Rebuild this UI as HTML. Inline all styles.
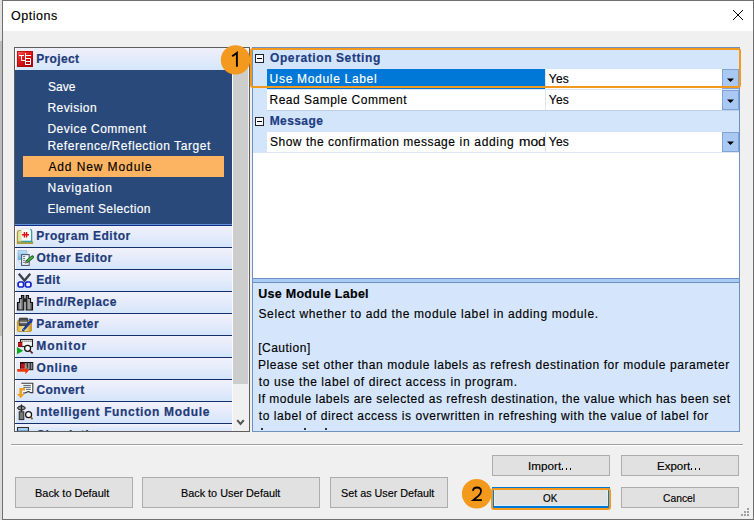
<!DOCTYPE html>
<html><head><meta charset="utf-8"><style>
html,body{margin:0;padding:0;width:754px;height:520px;overflow:hidden;background:#dadada;}
body{position:relative;font-family:"Liberation Sans",sans-serif;}
.t{position:absolute;white-space:pre;line-height:20px;-webkit-text-stroke:0.15px currentColor;}
.b{position:absolute;box-sizing:border-box;}
svg{position:absolute;}
</style></head><body>
<div class="b" style="left:0px;top:0px;width:2px;height:41px;background:#e2e2e2;"></div>
<div class="b" style="left:0px;top:41px;width:2px;height:295px;background:#bcbcbc;"></div>
<div class="b" style="left:0px;top:336px;width:2px;height:184px;background:#dcdcdc;"></div>
<div class="b" style="left:2px;top:0px;width:752px;height:520px;border:1px solid #707070;background:#f0f0f0;"></div>
<div class="b" style="left:3px;top:1px;width:750px;height:30px;background:#fff;"></div>
<div class="t" style="left:10.90px;top:6px;font-size:12.5px;color:#000;letter-spacing:0.533px;">Options</div>
<svg style="left:0;top:0" width="754" height="40" viewBox="0 0 754 40" fill="#000" shape-rendering="crispEdges"><rect x="733" y="10" width="1" height="1"/><rect x="742" y="10" width="1" height="1"/><rect x="734" y="11" width="1" height="1"/><rect x="741" y="11" width="1" height="1"/><rect x="735" y="12" width="1" height="1"/><rect x="740" y="12" width="1" height="1"/><rect x="736" y="13" width="1" height="1"/><rect x="739" y="13" width="1" height="1"/><rect x="737" y="14" width="1" height="1"/><rect x="738" y="14" width="1" height="1"/><rect x="738" y="15" width="1" height="1"/><rect x="737" y="15" width="1" height="1"/><rect x="739" y="16" width="1" height="1"/><rect x="736" y="16" width="1" height="1"/><rect x="740" y="17" width="1" height="1"/><rect x="735" y="17" width="1" height="1"/><rect x="741" y="18" width="1" height="1"/><rect x="734" y="18" width="1" height="1"/><rect x="742" y="19" width="1" height="1"/><rect x="733" y="19" width="1" height="1"/></svg>
<div class="b" style="left:14px;top:47px;width:236px;height:385px;border:1px solid #5e5e5e;background:#fff;"></div>
<div class="b" style="left:0;top:0;width:754px;height:520px;clip-path:inset(48px 505px 89px 15px);">
<div class="b" style="left:15px;top:48px;width:217px;height:22px;background:linear-gradient(#efeff9,#d5e7fc);border-left:1px solid #fff;"></div>
<div class="b" style="left:15px;top:70px;width:217px;height:154px;background:#29497a;"></div>
<div class="b" style="left:15px;top:224px;width:217px;height:1px;background:#6590dc;"></div>
<div class="b" style="left:15px;top:225px;width:217px;height:1px;background:#0e2e7e;"></div>
<div class="b" style="left:23px;top:156px;width:201px;height:21px;background:#fcb462;"></div>
<div class="t" style="left:47.90px;top:77px;font-size:12px;color:#fff;letter-spacing:0.033px;">Save</div>
<div class="t" style="left:47.40px;top:98px;font-size:12px;color:#fff;letter-spacing:0.457px;">Revision</div>
<div class="t" style="left:47.40px;top:119px;font-size:12px;color:#fff;letter-spacing:0.508px;">Device Comment</div>
<div class="t" style="left:47.40px;top:136px;font-size:12px;color:#fff;letter-spacing:0.550px;">Reference/Reflection Target</div>
<div class="t" style="left:48.40px;top:157px;font-size:12px;color:#000;letter-spacing:0.900px;">Add New Module</div>
<div class="t" style="left:47.40px;top:178px;font-size:12px;color:#fff;letter-spacing:0.867px;">Navigation</div>
<div class="t" style="left:47.40px;top:199px;font-size:12px;color:#fff;letter-spacing:0.400px;">Element Selection</div>
<div class="t" style="left:36.20px;top:49px;font-size:12px;color:#1f3b79;font-weight:bold;letter-spacing:0.367px;-webkit-text-stroke:0.2px #1f3b79;">Project</div>
<div class="b" style="left:15px;top:226px;width:217px;height:21px;background:linear-gradient(#f2f1fa,#d5e5fb);border-left:1px solid #fff;"></div>
<div class="b" style="left:15px;top:247px;width:217px;height:1px;background:#132f6a;"></div>
<div class="t" style="left:36.20px;top:226px;font-size:12px;color:#1f3b79;font-weight:bold;letter-spacing:0.508px;-webkit-text-stroke:0.2px #1f3b79;">Program Editor</div>
<div class="b" style="left:15px;top:248px;width:217px;height:21px;background:linear-gradient(#f2f1fa,#d5e5fb);border-left:1px solid #fff;"></div>
<div class="b" style="left:15px;top:269px;width:217px;height:1px;background:#132f6a;"></div>
<div class="t" style="left:36.50px;top:248px;font-size:12px;color:#1f3b79;font-weight:bold;letter-spacing:0.518px;-webkit-text-stroke:0.2px #1f3b79;">Other Editor</div>
<div class="b" style="left:15px;top:270px;width:217px;height:21px;background:linear-gradient(#f2f1fa,#d5e5fb);border-left:1px solid #fff;"></div>
<div class="b" style="left:15px;top:291px;width:217px;height:1px;background:#132f6a;"></div>
<div class="t" style="left:36.20px;top:270px;font-size:12px;color:#1f3b79;font-weight:bold;letter-spacing:0.400px;-webkit-text-stroke:0.2px #1f3b79;">Edit</div>
<div class="b" style="left:15px;top:292px;width:217px;height:21px;background:linear-gradient(#f2f1fa,#d5e5fb);border-left:1px solid #fff;"></div>
<div class="b" style="left:15px;top:313px;width:217px;height:1px;background:#132f6a;"></div>
<div class="t" style="left:36.20px;top:292px;font-size:12px;color:#1f3b79;font-weight:bold;letter-spacing:0.500px;-webkit-text-stroke:0.2px #1f3b79;">Find/Replace</div>
<div class="b" style="left:15px;top:314px;width:217px;height:21px;background:linear-gradient(#f2f1fa,#d5e5fb);border-left:1px solid #fff;"></div>
<div class="b" style="left:15px;top:335px;width:217px;height:1px;background:#132f6a;"></div>
<div class="t" style="left:36.20px;top:314px;font-size:12px;color:#1f3b79;font-weight:bold;letter-spacing:0.475px;-webkit-text-stroke:0.2px #1f3b79;">Parameter</div>
<div class="b" style="left:15px;top:336px;width:217px;height:21px;background:linear-gradient(#f2f1fa,#d5e5fb);border-left:1px solid #fff;"></div>
<div class="b" style="left:15px;top:357px;width:217px;height:1px;background:#132f6a;"></div>
<div class="t" style="left:36.20px;top:336px;font-size:12px;color:#1f3b79;font-weight:bold;letter-spacing:1.000px;-webkit-text-stroke:0.2px #1f3b79;">Monitor</div>
<div class="b" style="left:15px;top:358px;width:217px;height:21px;background:linear-gradient(#f2f1fa,#d5e5fb);border-left:1px solid #fff;"></div>
<div class="b" style="left:15px;top:379px;width:217px;height:1px;background:#132f6a;"></div>
<div class="t" style="left:36.50px;top:358px;font-size:12px;color:#1f3b79;font-weight:bold;letter-spacing:0.700px;-webkit-text-stroke:0.2px #1f3b79;">Online</div>
<div class="b" style="left:15px;top:380px;width:217px;height:21px;background:linear-gradient(#f2f1fa,#d5e5fb);border-left:1px solid #fff;"></div>
<div class="b" style="left:15px;top:401px;width:217px;height:1px;background:#132f6a;"></div>
<div class="t" style="left:36.50px;top:380px;font-size:12px;color:#1f3b79;font-weight:bold;letter-spacing:0.383px;-webkit-text-stroke:0.2px #1f3b79;">Convert</div>
<div class="b" style="left:15px;top:402px;width:217px;height:21px;background:linear-gradient(#f2f1fa,#d5e5fb);border-left:1px solid #fff;"></div>
<div class="b" style="left:15px;top:423px;width:217px;height:1px;background:#132f6a;"></div>
<div class="t" style="left:36.20px;top:402px;font-size:12px;color:#1f3b79;font-weight:bold;letter-spacing:0.662px;-webkit-text-stroke:0.2px #1f3b79;">Intelligent Function Module</div>
<div class="b" style="left:15px;top:424px;width:217px;height:7px;background:linear-gradient(#f2f1fa,#d5e5fb);border-left:1px solid #fff;"></div>
<div class="t" style="left:36.70px;top:425px;font-size:12px;color:#1f3b79;font-weight:bold;letter-spacing:0.744px;-webkit-text-stroke:0.2px #1f3b79;">Simulation</div>
<svg style="left:0;top:0" width="754" height="520" viewBox="0 0 754 520">
<defs>
<linearGradient id="gRed" x1="0" y1="0" x2="0.8" y2="1"><stop offset="0" stop-color="#ff7070"/><stop offset="0.35" stop-color="#ee2020"/><stop offset="1" stop-color="#a00000"/></linearGradient>
<linearGradient id="gGray" x1="0" y1="0" x2="1" y2="0"><stop offset="0" stop-color="#404040"/><stop offset="0.45" stop-color="#b0b0b0"/><stop offset="1" stop-color="#383838"/></linearGradient>
<linearGradient id="gGold" x1="0" y1="0" x2="1" y2="0"><stop offset="0" stop-color="#e8b030"/><stop offset="0.5" stop-color="#fff4b0"/><stop offset="1" stop-color="#d09010"/></linearGradient>
<linearGradient id="gBlue" x1="0" y1="0" x2="0" y2="1"><stop offset="0" stop-color="#c0e4fa"/><stop offset="1" stop-color="#4898e0"/></linearGradient>
<linearGradient id="gDrawer" x1="0" y1="0" x2="0" y2="1"><stop offset="0" stop-color="#303030"/><stop offset="0.5" stop-color="#808080"/><stop offset="1" stop-color="#404040"/></linearGradient>
<linearGradient id="gRedCell" x1="0" y1="0" x2="0" y2="1"><stop offset="0" stop-color="#400000"/><stop offset="0.3" stop-color="#d01818"/><stop offset="1" stop-color="#901010"/></linearGradient>
</defs>
<!-- Project icon -->
<rect x="17" y="51" width="16" height="16" fill="url(#gRed)"/>
<rect x="17.5" y="51.5" width="15" height="15" fill="none" stroke="#b00808" stroke-width="1" opacity="0.8"/>
<path d="M19 55.5H24M21.5 55.5V60.5H25.5M25.5 53V65M25.5 55.5H31M25.5 58.5H30.5V64.5H25.5M25.5 61.5H30.5" stroke="#fff" stroke-width="1" fill="none"/>
<!-- Program Editor -->
<path d="M21 230.5H19.5Q17.5 230.5 17.5 232.5V243.5H32.5V241.5" stroke="#a89838" stroke-width="1.2" fill="#e8e498"/>
<rect x="17.6" y="241.2" width="14.8" height="2.4" fill="#b0a040"/>
<path d="M21.3 228.8H30Q31.7 228.8 31.7 230.5V241.2H21.3Z" fill="#fcfefe" stroke="#d0d8d8" stroke-width="0.6"/>
<path d="M30.2 229.3Q31.6 229.6 31.6 231V241.5H21.3" stroke="#38a0a0" stroke-width="1.3" fill="none"/>
<path d="M24.4 232V237.6M26.6 232V237.6M22 234.8H29" stroke="#e01010" stroke-width="1.4" fill="none"/>
<!-- Other Editor -->
<path d="M18 250.5H26.8V263.5H21L18 260Z" fill="url(#gBlue)" stroke="#90a8c8" stroke-width="0.6"/>
<path d="M18 260L21 263.5V260Z" fill="#f0f4f8"/>
<rect x="21.6" y="254.6" width="7.6" height="10.8" fill="#f8f8f8" stroke="#4a5a74" stroke-width="1.1"/>
<path d="M23 256.5H25.2M23 258.5H25.2M23 260.4H25.2M23 262.4H25.2" stroke="#607080" stroke-width="0.9"/>
<path d="M27 261.5L32.4 257" stroke="#1a5a1a" stroke-width="3.2" stroke-linecap="round"/>
<path d="M27.2 261.3L32.2 257.2" stroke="#48b848" stroke-width="1.6" stroke-linecap="round"/>
<path d="M27 260.5L25.2 263.3L28 262.3Z" fill="#e8d0a0" stroke="#303030" stroke-width="0.5"/>
<!-- Edit scissors -->
<path d="M18.8 273.8L24.5 280.6L30.2 273.8" stroke="#3c4048" stroke-width="2.3" fill="none"/>
<path d="M19.4 282H22.5L23.6 283.2V286L22.6 287H19.2L18.1 285.9V283.2Z" fill="#f4f6ff" stroke="#1420c8" stroke-width="1.7"/>
<path d="M29.6 282H26.5L25.4 283.2V286L26.4 287H29.8L30.9 285.9V283.2Z" fill="#f4f6ff" stroke="#1420c8" stroke-width="1.7"/>
<!-- Find/Replace binoculars -->
<path d="M21.5 295.5H23.8V310H17.5V302.5H19.5V298.5H21.5Z" fill="url(#gGray)" stroke="#101010" stroke-width="1.1"/>
<path d="M28.5 295.5H26.2V310H32.5V302.5H30.5V298.5H28.5Z" fill="url(#gGray)" stroke="#101010" stroke-width="1.1"/>
<rect x="23.5" y="298.3" width="3" height="3.6" fill="#202020"/>
<!-- Parameter -->
<rect x="17.4" y="320.5" width="14" height="11" rx="1.2" fill="url(#gGold)" stroke="#b88820" stroke-width="0.8"/>
<rect x="19.2" y="318.2" width="8.6" height="7.4" rx="0.6" fill="url(#gDrawer)" stroke="#282828" stroke-width="0.8"/>
<path d="M19.8 322.5H27.2" stroke="#e0e0e0" stroke-width="0.7"/>
<path d="M23.3 330L30.6 321.3" stroke="#1a3c9c" stroke-width="2.6" stroke-linecap="round"/>
<path d="M29.2 319.2L32 319.8L31.2 322.6" stroke="#1a3c9c" stroke-width="1.6" fill="none"/>
<circle cx="23.8" cy="329.4" r="0.5" fill="#80c0ff"/>
<!-- Monitor -->
<rect x="20.5" y="339.5" width="12" height="7" fill="#f4f4f4" stroke="#202020" stroke-width="1.1"/>
<path d="M21.5 341.2H32" stroke="#404040" stroke-width="1" stroke-dasharray="1.2 0.8"/>
<rect x="18" y="342" width="4.4" height="5" fill="url(#gRedCell)"/>
<path d="M17 347L23.2 350.8L17 354.3Z" fill="#10a818"/>
<circle cx="27.6" cy="348.3" r="3" fill="#fafafa" stroke="#101010" stroke-width="1.2"/>
<path d="M29.9 350.7L32.6 353.3" stroke="#602028" stroke-width="1.7"/>
<!-- Online -->
<rect x="20.5" y="362.5" width="12.3" height="7.2" fill="#8c8c8c" stroke="#151515" stroke-width="1"/>
<rect x="20.8" y="362.8" width="4" height="6.5" fill="url(#gRedCell)"/>
<path d="M27.3 363V369.4M30.3 363V369.4" stroke="#2c2c2c" stroke-width="1.1"/>
<path d="M17.2 369.1H25.3V366.6L28.9 370.4L25.3 374.2V371.8H17.2Z" fill="#e83a10" stroke="#fff" stroke-width="0.8" stroke-opacity="0.7" paint-order="stroke"/>
<!-- Convert -->
<path d="M21.3 383.3H32.8V392.6H30.4Q28.6 390.9 26.6 392.2Q25 393.2 23.2 392.9" fill="#fff" stroke="#383838" stroke-width="1.1"/>
<path d="M23.3 385.4H30.8M23.3 387.3H30.8M26 389.3H30.8" stroke="#3c4c5c" stroke-width="0.9"/>
<path d="M25 389.3H20.7V394.6" stroke="#f0a020" stroke-width="2.6" fill="none"/>
<path d="M16.9 394.1H24.5L20.7 398.2Z" fill="#f0a020"/>
<!-- Intelligent Function Module -->
<path d="M17.2 408Q21.4 403.6 25.6 408Q21.4 412.4 17.2 408Z" fill="#f4f4f4" stroke="#101010" stroke-width="1"/>
<path d="M18.2 407H24.6M18.2 409H24.6M21.4 404.3V412" stroke="#101010" stroke-width="0.9"/>
<rect x="19.2" y="411.8" width="4.6" height="7.8" fill="#787878" stroke="#2a2a2a" stroke-width="1"/>
<circle cx="28.6" cy="414.7" r="3" fill="#fafafa" stroke="#101010" stroke-width="1.2"/>
<path d="M30.7 417L32.5 419.3" stroke="#8a5020" stroke-width="1.7"/>
<!-- Simulation (partial) -->
<rect x="17.5" y="427.5" width="11" height="6" fill="#70a8dc" stroke="#303030" stroke-width="1"/>
<rect x="18.5" y="428.5" width="9" height="1" fill="#e8f4ff"/>
</svg>
</div>
<div class="b" style="left:232px;top:48px;width:17px;height:383px;background:#f0f0f0;border-left:1px solid #fafafa;"></div>
<div class="b" style="left:233px;top:65px;width:15px;height:319px;background:#cdcdcd;"></div>
<svg style="left:236px;top:418px" width="10" height="10" viewBox="0 0 10 10"><path d="M1.2 2.2L4.5 6L7.8 2.2" stroke="#555" stroke-width="2" fill="none"/></svg>
<div class="b" style="left:252px;top:47px;width:488px;height:232px;border:1px solid #6e91c3;background:#fff;"></div>
<div class="b" style="left:253px;top:48px;width:14px;height:105px;background:#d3e5fb;"></div>
<div class="b" style="left:253px;top:48px;width:486px;height:21px;background:#d3e5fb;"></div>
<div class="b" style="left:253px;top:110px;width:486px;height:22px;background:#d3e5fb;"></div>
<div class="b" style="left:267px;top:110px;width:472px;height:1px;background:#bcd0ea;"></div>
<div class="b" style="left:267px;top:89px;width:472px;height:1px;background:#dfe5f2;"></div>
<div class="b" style="left:267px;top:152px;width:472px;height:1px;background:#dfe5f2;"></div>
<div class="b" style="left:267px;top:69px;width:278px;height:20px;background:#0078d7;"></div>
<div class="b" style="left:545px;top:69px;width:1px;height:20px;background:#dfe5f2;"></div>
<div class="b" style="left:722px;top:69px;width:17px;height:20px;background:#a9c9f2;border:1px solid #7ea3d6;"></div>
<svg style="left:722px;top:69px" width="17" height="20" viewBox="0 0 17 20"><path d="M5 9.5H12L8.5 13Z" fill="#000"/></svg>
<div class="b" style="left:545px;top:90px;width:1px;height:20px;background:#dfe5f2;"></div>
<div class="b" style="left:722px;top:90px;width:17px;height:20px;background:#a9c9f2;border:1px solid #7ea3d6;"></div>
<svg style="left:722px;top:90px" width="17" height="20" viewBox="0 0 17 20"><path d="M5 9.5H12L8.5 13Z" fill="#000"/></svg>
<div class="b" style="left:545px;top:132px;width:1px;height:20px;background:#dfe5f2;"></div>
<div class="b" style="left:722px;top:132px;width:17px;height:20px;background:#a9c9f2;border:1px solid #7ea3d6;"></div>
<svg style="left:722px;top:132px" width="17" height="20" viewBox="0 0 17 20"><path d="M5 9.5H12L8.5 13Z" fill="#000"/></svg>
<div class="b" style="left:255px;top:54px;width:9px;height:9px;border:1px solid #222;background:#f5f8fd;"></div>
<div class="b" style="left:257px;top:58px;width:5px;height:1px;background:#000;"></div>
<div class="b" style="left:255px;top:117px;width:9px;height:9px;border:1px solid #222;background:#f5f8fd;"></div>
<div class="b" style="left:257px;top:121px;width:5px;height:1px;background:#000;"></div>
<div class="t" style="left:270.00px;top:48px;font-size:12px;color:#1e3c82;font-weight:bold;letter-spacing:0.600px;-webkit-text-stroke:0.2px #1e3c82;">Operation Setting</div>
<div class="t" style="left:269.60px;top:69px;font-size:12px;color:#fff;letter-spacing:0.687px;">Use Module Label</div>
<div class="t" style="left:548.70px;top:69px;font-size:12px;color:#000;letter-spacing:0.300px;">Yes</div>
<div class="t" style="left:269.50px;top:90px;font-size:12px;color:#000;letter-spacing:0.500px;">Read Sample Comment</div>
<div class="t" style="left:548.70px;top:90px;font-size:12px;color:#000;letter-spacing:0.300px;">Yes</div>
<div class="t" style="left:269.70px;top:111px;font-size:12px;color:#1e3c82;font-weight:bold;letter-spacing:0.417px;-webkit-text-stroke:0.2px #1e3c82;">Message</div>
<div class="b" style="left:0;top:0;width:754px;height:520px;clip-path:inset(132px 209px 368px 267px);">
<div class="t" style="left:270.00px;top:132px;font-size:12px;color:#000;letter-spacing:0.507px;">Show the confirmation message</div>
<div class="t" style="left:459.60px;top:132px;font-size:12px;color:#000;letter-spacing:0.675px;">in adding</div>
<div class="t" style="left:518.68px;top:132px;font-size:12px;color:#000;transform:scaleX(1.1468);transform-origin:0 0;">mod</div>
</div>
<div class="t" style="left:548.70px;top:132px;font-size:12px;color:#000;letter-spacing:0.300px;">Yes</div>
<div class="b" style="left:253px;top:279px;width:486px;height:3px;background:#a9cbf4;"></div>
<div class="b" style="left:252px;top:279px;width:1px;height:3px;background:#6e91c3;"></div>
<div class="b" style="left:739px;top:279px;width:1px;height:3px;background:#6e91c3;"></div>
<div class="b" style="left:252px;top:282px;width:488px;height:150px;border:1px solid #6e91c3;background:#d5e6fc;"></div>
<div class="b" style="left:0;top:0;width:754px;height:520px;clip-path:inset(283px 15px 89px 253px);">
<div class="t" style="left:258.30px;top:284px;font-size:12.5px;color:#000;font-weight:bold;letter-spacing:0.267px;">Use Module Label</div>
<div class="t" style="left:258.50px;top:304px;font-size:12px;color:#000;letter-spacing:0.618px;">Select whether to add the module label in adding module.</div>
<div class="t" style="left:258.20px;top:338px;font-size:12px;color:#000;letter-spacing:0.5px;">[Caution]</div>
<div class="t" style="left:258.00px;top:355px;font-size:12px;color:#000;letter-spacing:0.568px;">Please set other than module labels as refresh destination for module parameter</div>
<div class="t" style="left:258.80px;top:372px;font-size:12px;color:#000;letter-spacing:0.593px;">to use the label of direct access in program.</div>
<div class="t" style="left:257.90px;top:389px;font-size:12px;color:#000;letter-spacing:0.493px;">If module labels are selected as refresh destination, the value which has been set</div>
<div class="t" style="left:258.80px;top:406px;font-size:12px;color:#000;letter-spacing:0.549px;">to label of direct access is overwritten in refreshing with the value of label for</div>
<div class="b" style="left:261px;top:428px;width:2px;height:2px;background:#333;"></div>
<div class="b" style="left:304px;top:428px;width:2px;height:2px;background:#333;"></div>
<div class="b" style="left:325px;top:428px;width:2px;height:2px;background:#333;"></div>
</div>
<div class="b" style="left:11px;top:444px;width:732px;height:1px;background:#a0a0a0;"></div>
<div class="b" style="left:11px;top:445px;width:732px;height:1px;background:#fff;"></div>
<div class="b" style="left:15px;top:477px;width:118px;height:31px;border:1px solid #adadad;background:#e1e1e1;"></div>
<div class="t" style="left:35.40px;top:483px;font-size:11px;color:#000;transform:scaleX(0.9946);transform-origin:0 0;">Back to Default</div>
<div class="b" style="left:142px;top:477px;width:178px;height:31px;border:1px solid #adadad;background:#e1e1e1;"></div>
<div class="t" style="left:180.61px;top:483px;font-size:11px;color:#000;transform:scaleX(0.9850);transform-origin:0 0;">Back to User Default</div>
<div class="b" style="left:330px;top:477px;width:118px;height:31px;border:1px solid #adadad;background:#e1e1e1;"></div>
<div class="t" style="left:341.21px;top:483px;font-size:11px;color:#000;transform:scaleX(0.9789);transform-origin:0 0;">Set as User Default</div>
<div class="b" style="left:492px;top:455px;width:118px;height:21px;border:1px solid #adadad;background:#e1e1e1;"></div>
<div class="t" style="left:527.69px;top:456px;font-size:11px;color:#000;transform:scaleX(1.0631);transform-origin:0 0;">Import</div>
<div class="b" style="left:561.7px;top:467.9px;width:1.6px;height:1.8px;background:#000;border-radius:0.3px;"></div>
<div class="b" style="left:565.6px;top:467.9px;width:1.6px;height:1.8px;background:#000;border-radius:0.3px;"></div>
<div class="b" style="left:569.6px;top:467.9px;width:1.6px;height:1.8px;background:#000;border-radius:0.3px;"></div>
<div class="b" style="left:621px;top:455px;width:118px;height:21px;border:1px solid #adadad;background:#e1e1e1;"></div>
<div class="t" style="left:656.56px;top:456px;font-size:11px;color:#000;transform:scaleX(1.0455);transform-origin:0 0;">Export</div>
<div class="b" style="left:690.7px;top:467.9px;width:1.6px;height:1.8px;background:#000;border-radius:0.3px;"></div>
<div class="b" style="left:694.6px;top:467.9px;width:1.6px;height:1.8px;background:#000;border-radius:0.3px;"></div>
<div class="b" style="left:698.6px;top:467.9px;width:1.6px;height:1.8px;background:#000;border-radius:0.3px;"></div>
<div class="b" style="left:492px;top:487px;width:118px;height:21px;border:2px solid #0078d7;background:#e1e1e1;box-shadow:inset 0 0 0 1px #d4f2ff;"></div>
<div class="t" style="left:543.30px;top:488px;font-size:11px;color:#000;transform:scaleX(0.8987);transform-origin:0 0;">OK</div>
<div class="b" style="left:621px;top:487px;width:118px;height:21px;border:1px solid #adadad;background:#e1e1e1;"></div>
<div class="t" style="left:663.28px;top:488px;font-size:11px;color:#000;transform:scaleX(0.9394);transform-origin:0 0;">Cancel</div>
<div class="b" style="left:747px;top:508px;width:2px;height:2px;background:#a0a0a0;"></div>
<div class="b" style="left:744px;top:511px;width:2px;height:2px;background:#a0a0a0;"></div>
<div class="b" style="left:747px;top:511px;width:2px;height:2px;background:#a0a0a0;"></div>
<div class="b" style="left:741px;top:514px;width:2px;height:2px;background:#a0a0a0;"></div>
<div class="b" style="left:744px;top:514px;width:2px;height:2px;background:#a0a0a0;"></div>
<div class="b" style="left:747px;top:514px;width:2px;height:2px;background:#a0a0a0;"></div>
<div class="b" style="left:250px;top:48px;width:491px;height:40px;border:2px solid #f39a1e;border-radius:3px;"></div>
<div class="b" style="left:491px;top:488px;width:120px;height:22px;border:2px solid #f39a1e;border-radius:3px;"></div>
<svg style="left:0;top:0" width="754" height="520" viewBox="0 0 754 520">
<circle cx="235.5" cy="59.9" r="14.7" fill="#f39a1e"/>
<circle cx="476.7" cy="493.8" r="14.8" fill="#f39a1e"/>
<path d="M232.2 56.2L236.9 52.9V66.8" stroke="#000" stroke-width="1.9" fill="none"/>
<path d="M472.9 490.9C473.2 488.6 474.9 487.5 477 487.5C479.5 487.5 481 489.1 481 491.2C481 493 480.1 494.3 478.4 495.9L473.3 500.1H481.9" stroke="#000" stroke-width="1.8" fill="none"/>
</svg>
</body></html>
